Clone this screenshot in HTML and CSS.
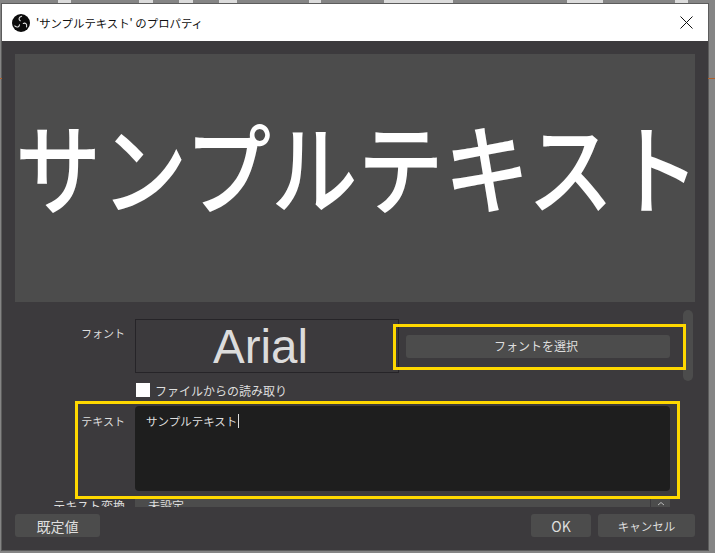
FILE: index.html
```html
<!DOCTYPE html>
<html lang="ja">
<head>
    <meta charset="UTF-8">
    <title>'サンプルテキスト' のプロパティ</title>
    <link rel="stylesheet" href="styles.css">
</head>
<body>
    <div class="desk-top"></div>
    <div class="desk-line desk-line-left"></div>
    <div class="desk-line desk-line-right"></div>
    <div class="dialog">
        <div class="titlebar">
            <svg class="obs-icon" width="18" height="18" viewBox="0 0 18 18">
                <circle cx="9" cy="9" r="9" fill="#0b0b0b"/>
                <g fill="none" stroke="#e4e4e4" stroke-width="1.1" stroke-linecap="round">
                    <path d="M8.2 6.8C6.4 5.6 6.6 3.2 9.6 2.2"/>
                    <path d="M8.2 6.8C6.4 5.6 6.6 3.2 9.6 2.2" transform="rotate(120 9 9)"/>
                    <path d="M8.2 6.8C6.4 5.6 6.6 3.2 9.6 2.2" transform="rotate(240 9 9)"/>
                </g>
            </svg>
            <span class="title-text">'サンプルテキスト' のプロパティ</span>
            <svg class="close-icon" width="13" height="13" viewBox="0 0 13 13">
                <path d="M0.5 0.5L12.5 12.5M12.5 0.5L0.5 12.5" stroke="#111" stroke-width="1" fill="none"/>
            </svg>
        </div>
        <div class="dialog-body">
            <div class="preview"><span class="preview-text">サンプルテキスト</span></div>
            <div class="props">
                <div class="props-list">
                    <div class="row font-row">
                        <div class="label">フォント</div>
                        <div class="font-box">Arial</div>
                        <button class="btn select-btn">フォントを選択</button>
                    </div>
                    <div class="row check-row">
                        <span class="check"></span>
                        <span>ファイルからの読み取り</span>
                    </div>
                    <div class="row text-row">
                        <div class="label">テキスト</div>
                        <div class="textarea">サンプルテキスト<span class="caret"></span></div>
                    </div>
                    <div class="row combo-row">
                        <div class="label">テキスト変換</div>
                        <div class="combo">
                            <span class="combo-value">未設定</span>
                            <span class="combo-arrow">
                                <svg width="8" height="5" viewBox="0 0 8 5"><path d="M1 4L4 1.5L7 4" stroke="#b8b8b8" fill="none"/></svg>
                            </span>
                        </div>
                    </div>
                </div>
                <div class="scrollbar"></div>
            </div>
            <div class="footer">
                <button class="btn default-btn">既定値</button>
                <div class="footer-right">
                    <button class="btn ok-btn">OK</button>
                    <button class="btn cancel-btn">キャンセル</button>
                </div>
            </div>
        </div>
    </div>
    <div class="mark mark-button"></div>
    <div class="mark mark-text"></div>
</body>
</html>
```

FILE: styles.css
```css
* {
    box-sizing: border-box;
    font-family: "Noto Sans CJK JP", "Noto Sans", sans-serif;
}
html, body {
    margin: 0;
    height: 553px;
    overflow: hidden;
}
body {
    background: #858585;
    position: relative;
}
.desk-top {
    height: 4px;
    background: linear-gradient(to right,
        #858585 58px, #dcdcdc 58px, #dcdcdc 71px, #858585 71px,
        #858585 139px, #dcdcdc 139px, #dcdcdc 153px, #858585 153px,
        #858585 179px, #dcdcdc 179px, #dcdcdc 193px, #858585 193px,
        #858585 219px, #dcdcdc 219px, #dcdcdc 237px, #858585 237px,
        #858585 309px, #dcdcdc 309px, #dcdcdc 321px, #858585 321px,
        #858585 384px, #dcdcdc 384px, #dcdcdc 453px, #858585 453px,
        #858585 567px, #dcdcdc 567px, #dcdcdc 603px, #858585 603px,
        #858585 675px, #dcdcdc 675px, #dcdcdc 688px, #858585 688px);
}
.desk-line {
    position: absolute;
    top: 78px;
    height: 1px;
    background: #b0602c;
}
.desk-line-left {
    left: 0;
    width: 2px;
}
.desk-line-right {
    left: 708px;
    width: 7px;
}
.dialog {
    width: 706px;
    height: 546px;
    margin-left: 2px;
    display: flex;
    flex-direction: column;
    box-shadow: 0 0 0 1px #5c5c5c;
}
.titlebar {
    height: 37px;
    background: #fff;
    display: flex;
    align-items: center;
    padding: 0 15px 0 10px;
    flex-shrink: 0;
}
.obs-icon {
    margin-right: 6px;
}
.title-text {
    font-size: 11.4px;
    color: #111;
    flex: 1;
}
.dialog-body {
    flex: 1;
    background: #3c3a3d;
    padding: 13px;
    display: flex;
    flex-direction: column;
    color: #dedede;
    font-size: 12px;
}
.preview {
    height: 248px;
    background: #4c4c4c;
    color: #fff;
    display: flex;
    justify-content: center;
    overflow: hidden;
    flex-shrink: 0;
}
.preview-text {
    font-size: 85px;
    font-weight: 500;
    line-height: 224px;
    white-space: nowrap;
    flex-shrink: 0;
    transform: translateX(2px) scale(1.015, 1.16);
}
.props {
    display: flex;
    height: 205px;
    overflow: hidden;
    padding-top: 17px;
}
.props-list {
    width: 655px;
    flex-shrink: 0;
}
.row {
    display: flex;
}
.label {
    width: 110px;
    margin-right: 10px;
    text-align: right;
    white-space: nowrap;
    line-height: 16px;
    font-size: 11px;
    flex-shrink: 0;
}
.font-row {
    height: 54px;
}
.font-row .label {
    padding-top: 6px;
}
.font-box {
    width: 264px;
    height: 54px;
    border: 1px solid #262428;
    padding-right: 13px;
    font-family: "Liberation Sans", sans-serif;
    font-size: 47.5px;
    line-height: 53px;
    text-align: center;
    color: #dcdcdc;
}
.btn {
    height: 23px;
    border: none;
    border-radius: 3px;
    background: #4c4c4c;
    color: #dedede;
    font-size: 12px;
    padding: 0;
}
.select-btn {
    width: 264px;
    margin: 16px 0 0 7px;
    padding: 0 4px 2px 0;
}
.check-row {
    margin: 10px 0 0 121px;
    height: 14px;
    align-items: center;
    line-height: 16px;
}
.check-row span:last-child {
    padding-top: 2px;
}
.check {
    width: 14px;
    height: 14px;
    background: #fff;
    margin-right: 5px;
}
.text-row {
    margin-top: 9px;
}
.text-row .label {
    padding-top: 7px;
}
.textarea {
    width: 535px;
    height: 85px;
    background: #1e1e1e;
    border-radius: 4px;
    padding: 7px 11px;
    line-height: 16px;
    font-size: 11.5px;
}
.caret {
    display: inline-block;
    width: 1px;
    height: 14px;
    margin-left: 1px;
    background: #dedede;
    vertical-align: -2px;
}
.combo-row {
    margin-top: 8px;
}
.combo-row .label {
    line-height: 14px;
    font-size: 12px;
}
.combo {
    width: 535px;
    height: 22px;
    background: #4c4c4c;
    display: flex;
    justify-content: space-between;
    line-height: 14px;
}
.combo-value {
    padding-left: 13px;
}
.combo-arrow {
    width: 20px;
    height: 22px;
    border-left: 1px solid #3c3a3d;
    display: flex;
    justify-content: center;
    padding-top: 2px;
}
.scrollbar {
    width: 10px;
    height: 71px;
    margin: -9px 0 0 13px;
    background: #4c4c4c;
    border-radius: 5px;
    flex-shrink: 0;
}
.footer {
    display: flex;
    justify-content: space-between;
    margin-top: 7px;
}
.footer-right {
    display: flex;
    gap: 7px;
}
.default-btn {
    width: 85px;
    font-size: 14px;
}
.ok-btn {
    width: 60px;
    font-size: 14px;
}
.cancel-btn {
    width: 97px;
    font-size: 11.5px;
}
/* yellow annotations over the dialog */
.mark {
    position: absolute;
    border: 3px solid #ffd800;
}
.mark-button {
    left: 393px;
    top: 324px;
    width: 293px;
    height: 46px;
}
.mark-text {
    left: 75px;
    top: 401px;
    width: 605px;
    height: 98px;
}
```
